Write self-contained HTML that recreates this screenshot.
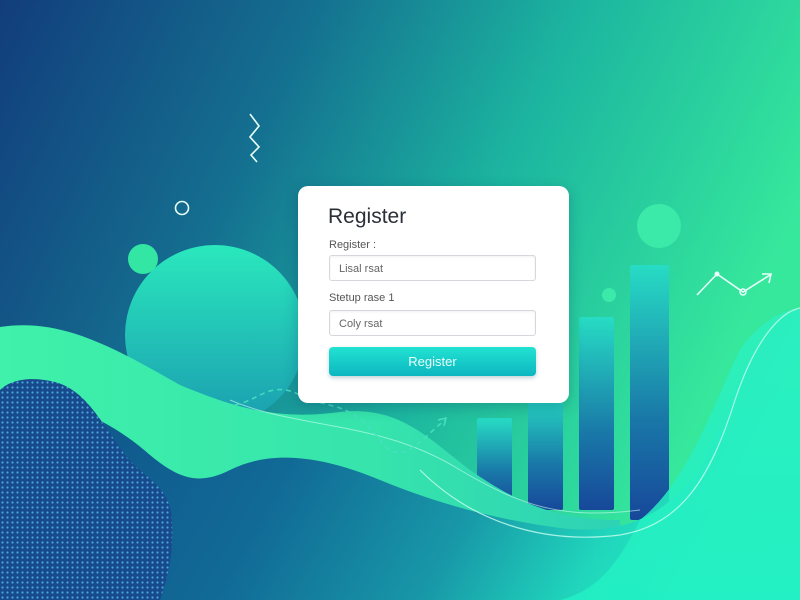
<!DOCTYPE html>
<html><head><meta charset="utf-8"><style>
html,body{margin:0;padding:0;width:800px;height:600px;overflow:hidden;font-family:"Liberation Sans",sans-serif}
svg{position:absolute;left:0;top:0}
.card{position:absolute;left:298px;top:186px;width:271px;height:217px;background:#fff;border-radius:10px;box-shadow:0 4px 14px rgba(0,40,80,.25)}
.t{position:absolute;left:30px;top:19px;font-size:21px;color:#2b2f38}
.l{position:absolute;left:31px;font-size:11px;color:#555}
.in{position:absolute;left:31px;width:207px;height:26px;border:1px solid #d4d8dc;border-radius:3px;box-sizing:border-box;font-size:11px;color:#666;padding:7px 0 0 9px;box-shadow:inset 0 1px 2px rgba(0,0,0,.06)}
.btn{position:absolute;left:31px;top:161px;width:207px;height:29px;border-radius:4px;background:linear-gradient(#22e3d2,#0cb6c0);color:#eafffb;font-size:13px;text-align:center;line-height:29px;box-shadow:0 2px 4px rgba(0,80,100,.25)}
</style></head><body>
<svg width="800" height="600" viewBox="0 0 800 600">
<defs>
<linearGradient id="bg" x1="0" y1="0" x2="1" y2="0.35">
<stop offset="0" stop-color="#123d7c"/><stop offset="0.35" stop-color="#146f90"/><stop offset="0.65" stop-color="#1cb5a0"/><stop offset="1" stop-color="#36e89c"/></linearGradient>
<linearGradient id="circ" x1="0" y1="0" x2="0" y2="1"><stop offset="0" stop-color="#2ae8bd"/><stop offset="1" stop-color="#1a9db0"/></linearGradient>
<linearGradient id="bar" x1="0" y1="0" x2="0" y2="1"><stop offset="0" stop-color="#27dcc4"/><stop offset="0.6" stop-color="#1978a8"/><stop offset="1" stop-color="#17489a"/></linearGradient>
<linearGradient id="wave" x1="0" y1="0" x2="1" y2="0"><stop offset="0" stop-color="#3ff1aa"/><stop offset="0.6" stop-color="#36e4ac"/><stop offset="1" stop-color="#2ed2b5"/></linearGradient>
<linearGradient id="dark" x1="0" y1="0" x2="1" y2="0.2"><stop offset="0" stop-color="#0f4a86"/><stop offset="0.45" stop-color="#116a96"/><stop offset="0.7" stop-color="#1898a8"/><stop offset="0.88" stop-color="#20d6bc"/><stop offset="1" stop-color="#26eec0"/></linearGradient>
<linearGradient id="rw" x1="0" y1="0" x2="0" y2="1"><stop offset="0" stop-color="#2df0bf"/><stop offset="1" stop-color="#22f0c4"/></linearGradient>
<pattern id="dots" width="5" height="5" patternUnits="userSpaceOnUse"><rect width="5" height="5" fill="#174a8c"/><circle cx="2.5" cy="2.5" r="1.1" fill="#4aa6d8"/></pattern>
</defs>
<rect width="800" height="600" fill="url(#bg)"/>
<circle cx="215" cy="335" r="90" fill="url(#circ)"/>
<circle cx="143" cy="259" r="15" fill="#33e6a4"/>
<circle cx="182" cy="208" r="6.5" fill="none" stroke="#e8fffa" stroke-width="1.6"/>
<circle cx="659" cy="226" r="22" fill="#3be9a8"/>
<circle cx="609" cy="295" r="7" fill="#3be9a8"/>
<polyline points="250,114 259,126 250,137 259,147 251,155 257,162" fill="none" stroke="#e8fffa" stroke-width="1.6"/>
<rect x="477" y="418" width="35" height="90" rx="2" fill="url(#bar)"/>
<rect x="528" y="395" width="35" height="115" rx="2" fill="url(#bar)"/>
<rect x="579" y="317" width="35" height="193" rx="2" fill="url(#bar)"/>
<rect x="630" y="265" width="39" height="255" rx="2" fill="url(#bar)"/>
<path d="M0,327 C60,318 110,345 180,385 C240,410 280,420 340,412 C400,405 430,440 470,470 C520,505 560,520 620,520 L620,600 L0,600 Z" fill="url(#wave)"/>
<path d="M0,400 C60,395 110,420 150,455 C180,480 200,485 230,470 C270,450 320,455 380,480 C440,505 500,520 560,528 C620,535 660,520 700,470 C730,400 760,320 800,310 L800,600 L0,600 Z" fill="url(#dark)"/>
<path d="M640,520 C690,480 715,400 740,350 C760,320 785,310 800,308 L800,600 L560,600 C600,590 620,560 640,520 Z" fill="url(#rw)" opacity="0.85"/>
<path d="M420,470 C470,520 540,545 620,535 C680,525 710,480 735,400 C755,340 780,312 800,308" fill="none" stroke="#c8fff0" stroke-width="1.2" opacity="0.8"/>
<path d="M230,400 C300,430 380,420 460,470 C520,505 560,520 640,510" fill="none" stroke="#c8fff0" stroke-width="1" opacity="0.6"/>
<path d="M0,390 C10,380 30,376 55,382 C85,390 100,420 125,455 C145,480 170,485 172,520 C174,560 165,585 160,600 L0,600 Z" fill="url(#dots)"/>
<path d="M235,405 C260,400 270,380 300,395 C330,410 350,400 380,440 C400,470 420,440 445,420" fill="none" stroke="#48e0c0" stroke-width="1.6" stroke-dasharray="5 4" opacity="0.9"/>
<path d="M438,420 L446,418 L444,426" fill="none" stroke="#48e0c0" stroke-width="1.5"/>
<polyline points="697,295 717,274 743,292 770,275" fill="none" stroke="#e8fffa" stroke-width="1.6"/>
<circle cx="717" cy="274" r="2.5" fill="#e8fffa"/><circle cx="743" cy="292" r="3" fill="none" stroke="#e8fffa" stroke-width="1.5"/>
<path d="M762,274 L771,274 L769,283" fill="none" stroke="#e8fffa" stroke-width="1.6"/>
</svg>
<div class="card">
<div class="t">Register</div>
<div class="l" style="top:53px">Register :</div>
<div class="in" style="top:69px">Lisal rsat</div>
<div class="l" style="top:106px">Stetup rase 1</div>
<div class="in" style="top:124px">Coly rsat</div>
<div class="btn">Register</div>
</div>
</body></html>
